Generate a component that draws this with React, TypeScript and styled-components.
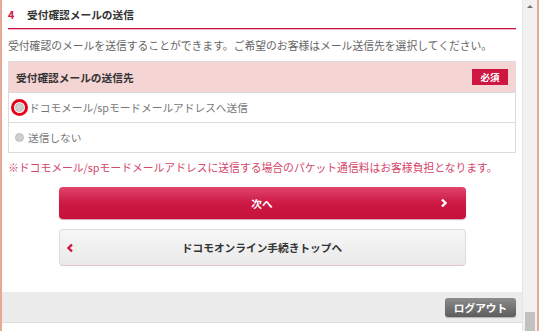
import React, { FC } from 'react';
import styled, { createGlobalStyle } from 'styled-components';

const colors = {
  crimson: '#cf1541',
  edge: '#e6a897',
  text: '#333333',
  sub: '#666666',
  note: '#d4466a',
  line: '#dcdcdc',
};

const GlobalStyle = createGlobalStyle`
  html, body {
    margin: 0;
    padding: 0;
    background: #ffffff;
    overflow: hidden;
  }
  body {
    font-family: "Noto Sans CJK JP", "Noto Sans", sans-serif;
    color: ${colors.text};
  }
`;

const Frame = styled.div`
  display: flex;
  width: 539px;
  height: 331px;
`;

const Edge = styled.div`
  width: 2px;
  flex: none;
  background: ${colors.edge};
`;

const Main = styled.div`
  flex: 1;
  display: flex;
  flex-direction: column;
  min-width: 0;
`;

const Content = styled.div`
  padding: 0 6px;
`;

const Heading = styled.h2`
  display: flex;
  margin: 0;
  padding: 8px 0 6px;
  font-size: 10.7px;
  line-height: 14px;
  font-weight: bold;
  color: ${colors.text};
  border-bottom: 1px solid ${colors.crimson};
  box-shadow: 0 1px 0 #efb3c2;
`;

const StepNumber = styled.span`
  width: 19px;
  color: ${colors.crimson};
`;

const Description = styled.p`
  margin: 8px 0 0;
  font-size: 10.8px;
  line-height: 16px;
  color: ${colors.sub};
  white-space: nowrap;
`;

const Table = styled.div`
  margin-top: 8px;
  border: 1px solid ${colors.line};
`;

const HeaderRow = styled.div`
  display: flex;
  align-items: center;
  justify-content: space-between;
  height: 30px;
  padding: 0 7px;
  background: #f5d4d4;
  font-size: 10.7px;
  font-weight: bold;
  color: ${colors.text};
`;

const Badge = styled.span`
  display: flex;
  align-items: center;
  justify-content: center;
  width: 36px;
  height: 16px;
  background: ${colors.crimson};
  color: #ffffff;
  font-size: 9.5px;
  font-weight: bold;
`;

const OptionRow = styled.label<{ $gap: number }>`
  display: flex;
  align-items: center;
  gap: ${({ $gap }) => $gap}px;
  height: 29px;
  padding-left: 6px;
  border-top: 1px solid ${colors.line};
  font-size: 10.7px;
  color: #777777;
`;

const Radio = styled.span<{ $focused?: boolean }>`
  position: relative;
  width: 7px;
  height: 7px;
  flex: none;
  border-radius: 50%;
  background: #cfcfcf;
  border: 0.5px solid #bdbdbd;

  &::after {
    content: '';
    display: ${({ $focused }) => ($focused ? 'block' : 'none')};
    position: absolute;
    left: -5px;
    top: -5px;
    width: 11px;
    height: 11px;
    border: 3px solid #e6001b;
    border-radius: 50%;
  }
`;

const Note = styled.p`
  margin: 6px 0 0;
  font-size: 10.8px;
  line-height: 16px;
  color: ${colors.note};
  white-space: nowrap;
`;

const Buttons = styled.div`
  display: flex;
  flex-direction: column;
  align-items: center;
`;

const ButtonBase = styled.button`
  display: grid;
  grid-template-columns: 20px 1fr 20px;
  align-items: center;
  width: 407px;
  padding: 0 6px;
  border-radius: 4px;
  font-family: inherit;
  font-size: 10.7px;
  font-weight: bold;
  cursor: pointer;
`;

const PrimaryButton = styled(ButtonBase)`
  margin-top: 12px;
  height: 32px;
  border: none;
  color: #ffffff;
  background: linear-gradient(#e0446a, #cc1a45 50%, #c5103b);
  box-shadow: 0 1px 1px rgba(120, 0, 30, 0.35);
`;

const SecondaryButton = styled(ButtonBase)`
  margin-top: 10px;
  height: 37px;
  border: 1px solid #dddddd;
  border-bottom-color: #e6c3c8;
  color: ${colors.text};
  background: linear-gradient(#f7f7f7, #e9e9e9);
`;

const ButtonLabel = styled.span`
  text-align: center;
`;

const Chevron = styled.svg`
  width: 8px;
  height: 10px;
`;

const Footer = styled.div`
  display: flex;
  align-items: center;
  justify-content: flex-end;
  height: 30px;
  margin-top: 26px;
  padding-right: 6px;
  background: #ececec;
  border-bottom: 1px solid #dddddd;
`;

const LogoutButton = styled.button`
  width: 71px;
  height: 19px;
  padding: 0;
  border: none;
  border-radius: 3px;
  background: linear-gradient(#8c8c8c, #5c5c5c);
  color: #ffffff;
  font-family: inherit;
  font-size: 10.7px;
  font-weight: bold;
  box-shadow: 0 1px 1px rgba(0, 0, 0, 0.25);
`;

const Scrollbar = styled.div`
  display: flex;
  flex-direction: column;
  justify-content: space-between;
  align-items: center;
  width: 14px;
  flex: none;
  background: #f1f1f1;
  border-left: 1px solid #e6e6e6;
`;

const ArrowUp = styled.span`
  margin-top: 5px;
  width: 0;
  height: 0;
  border-left: 3px solid transparent;
  border-right: 3px solid transparent;
  border-bottom: 3px solid #707070;
`;

const Thumb = styled.span`
  width: 10px;
  height: 19px;
  background: #c1c1c1;
`;

const ChevronRight: FC<{ color: string }> = ({ color }) => (
  <Chevron viewBox="0 0 8 10">
    <path d="M2 1.5 L5.5 5 L2 8.5" fill="none" stroke={color} strokeWidth="2.4" />
  </Chevron>
);

const ChevronLeft: FC<{ color: string }> = ({ color }) => (
  <Chevron viewBox="0 0 8 10">
    <path d="M6 1.5 L2.5 5 L6 8.5" fill="none" stroke={color} strokeWidth="2.4" />
  </Chevron>
);

const App: FC = (): JSX.Element => {
  return (
    <>
      <GlobalStyle />
      <Frame>
        <Edge />
        <Main>
          <Content>
            <Heading>
              <StepNumber>4</StepNumber>
              受付確認メールの送信
            </Heading>
            <Description>
              受付確認のメールを送信することができます。ご希望のお客様はメール送信先を選択してください。
            </Description>
            <Table>
              <HeaderRow>
                受付確認メールの送信先
                <Badge>必須</Badge>
              </HeaderRow>
              <OptionRow $gap={5}>
                <Radio $focused />
                ドコモメール/spモードメールアドレスへ送信
              </OptionRow>
              <OptionRow $gap={4}>
                <Radio />
                送信しない
              </OptionRow>
            </Table>
            <Note>
              ※ドコモメール/spモードメールアドレスに送信する場合のパケット通信料はお客様負担となります。
            </Note>
            <Buttons>
              <PrimaryButton>
                <span />
                <ButtonLabel>次へ</ButtonLabel>
                <ChevronRight color="#ffffff" />
              </PrimaryButton>
              <SecondaryButton>
                <ChevronLeft color={colors.crimson} />
                <ButtonLabel>ドコモオンライン手続きトップへ</ButtonLabel>
                <span />
              </SecondaryButton>
            </Buttons>
          </Content>
          <Footer>
            <LogoutButton>ログアウト</LogoutButton>
          </Footer>
        </Main>
        <Scrollbar>
          <ArrowUp />
          <Thumb />
        </Scrollbar>
        <Edge />
      </Frame>
    </>
  );
};

export default App;
